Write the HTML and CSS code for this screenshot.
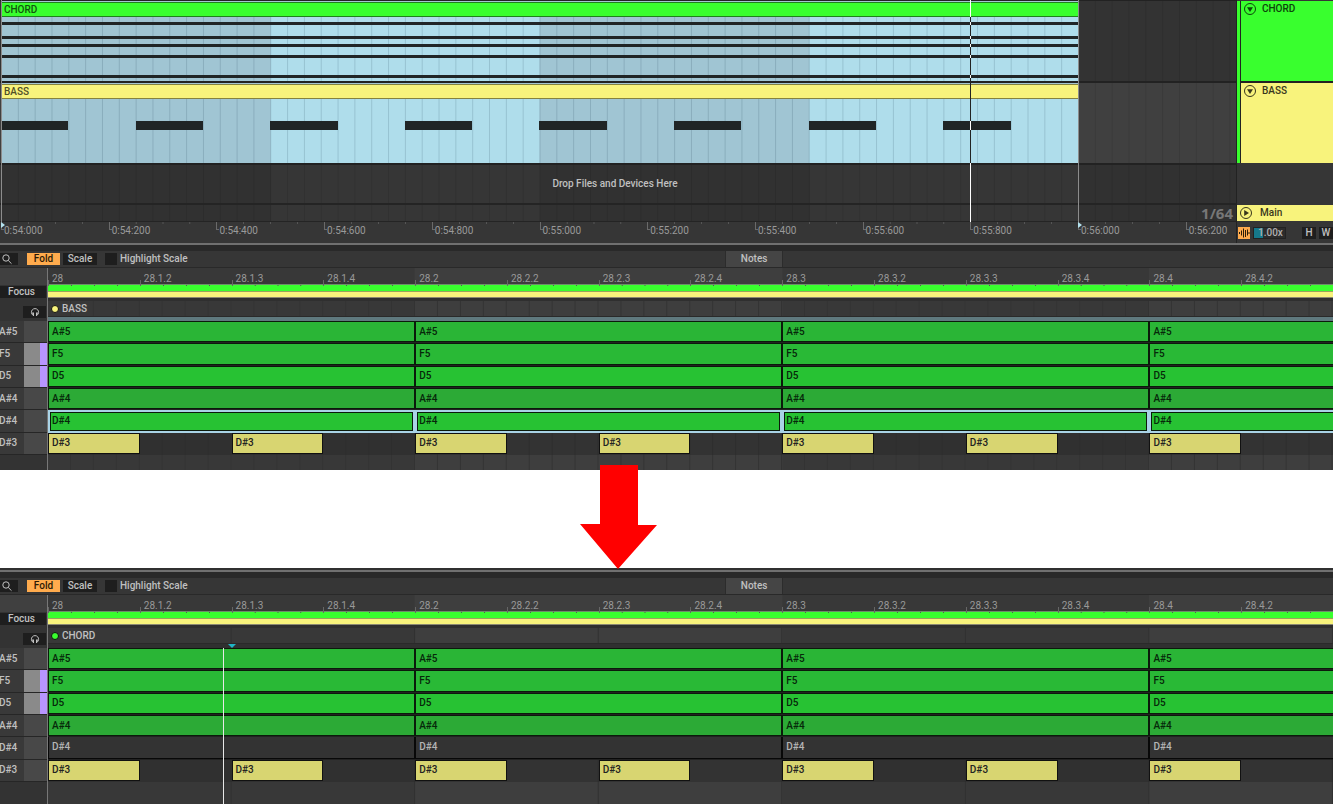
FILE: index.html
```html
<!DOCTYPE html>
<html lang="en">
  <head>
    <meta charset="UTF-8" />
    <meta name="viewport" content="width=device-width, initial-scale=1.0" />
    <title>Chord and Bass</title>
    <link rel="stylesheet" href="styles.css" />
  </head>
  <body>
    <section class="arrangement">
      <div class="timeline">
        <div class="lane">
          <div class="clip chord">
            <div class="clip-title">CHORD</div>
            <div class="clip-body chord-lines"></div>
          </div>
        </div>
        <div class="lane selected">
          <div class="clip bass">
            <div class="clip-title">BASS</div>
            <div class="clip-body bass-notes">
              <i></i><i></i><i></i><i></i><i></i><i></i><i></i><i></i>
            </div>
          </div>
        </div>
        <div class="drop-lane">Drop Files and Devices Here</div>
        <div class="main-lane">1/64</div>
        <div class="time-ruler">
          <span>0:54:000</span>
          <span>0:54:200</span>
          <span>0:54:400</span>
          <span>0:54:600</span>
          <span>0:54:800</span>
          <span>0:55:000</span>
          <span>0:55:200</span>
          <span>0:55:400</span>
          <span>0:55:600</span>
          <span>0:55:800</span>
          <span>0:56:000</span>
          <span>0:56:200</span>
        </div>
        <div class="marker start"></div>
        <div class="marker playhead"></div>
        <div class="marker end"></div>
      </div>

      <div class="tracks">
        <div class="track-group">
          <div class="track chord-track">
            <button class="fold" aria-label="Fold CHORD">
              <svg viewBox="0 0 14 14"><circle cx="7" cy="7" r="5.5" /><path d="M4 5.3h6L7 10z" /></svg>
            </button>
            CHORD
          </div>
          <div class="track bass-track">
            <button class="fold" aria-label="Fold BASS">
              <svg viewBox="0 0 14 14"><circle cx="7" cy="7" r="5.5" /><path d="M4 5.3h6L7 10z" /></svg>
            </button>
            BASS
          </div>
        </div>
        <div class="main-track">
          <button class="fold" aria-label="Unfold Main">
            <svg viewBox="0 0 14 14"><circle cx="7" cy="7" r="5.5" /><path d="M5.2 4v6L10 7z" /></svg>
          </button>
          Main
        </div>
        <div class="track-status">
          <button class="wave" aria-label="Waveform zoom">
            <svg viewBox="0 0 12 12"><path d="M1.5 5v2M3.5 3.5v5M5.5 1.5v9M7.5 3v7M9.5 2.5v6M11 5v2" /></svg>
          </button>
          <input class="zoom" type="text" value="1.00x" aria-label="Waveform zoom factor" />
          <button class="small">H</button>
          <button class="small">W</button>
        </div>
      </div>
    </section>

    <!-- piano roll, BASS selected -->
    <section class="roll fine">
      <div class="toolbar">
        <button class="search" aria-label="Search">
          <svg viewBox="0 0 12 12"><circle cx="5" cy="5" r="3.2" /><path d="M7.3 7.5L10.5 10.7" /></svg>
        </button>
        <button class="tool on">Fold</button>
        <button class="tool">Scale</button>
        <label class="check"><input type="checkbox" />Highlight Scale</label>
        <button class="tab">Notes</button>
      </div>
      <div class="roll-main">
        <div class="side">
          <button class="focus">Focus</button>
          <button class="listen" aria-label="Preview">
            <svg viewBox="0 0 10 10"><path d="M3 8.2A3.6 3.6 0 1 1 7 8.2" /><path class="cups" d="M2 5.5h2v3.5H3zM6 5.5h2L7 9H6z" /></svg>
          </button>
          <ul class="keys">
            <li>A#5</li>
            <li class="lit">F5</li>
            <li class="lit">D5</li>
            <li>A#4</li>
            <li>D#4</li>
            <li>D#3</li>
          </ul>
        </div>
        <div class="editor">
          <div class="beat-ruler">
            <span>28</span><span>28.1.2</span><span>28.1.3</span><span>28.1.4</span>
            <span>28.2</span><span>28.2.2</span><span>28.2.3</span><span>28.2.4</span>
            <span>28.3</span><span>28.3.2</span><span>28.3.3</span><span>28.3.4</span>
            <span>28.4</span><span>28.4.2</span>
          </div>
          <div class="loops"><div class="loop green"></div><div class="loop yellow"></div></div>
          <div class="clip-name"><i class="dot yellow"></i>BASS</div>
          <div class="strip"></div>
          <div class="rows">
            <div class="row as5"><span>A#5</span><span>A#5</span><span>A#5</span><span>A#5</span></div>
            <div class="row f5"><span>F5</span><span>F5</span><span>F5</span><span>F5</span></div>
            <div class="row d5"><span>D5</span><span>D5</span><span>D5</span><span>D5</span></div>
            <div class="row as4"><span>A#4</span><span>A#4</span><span>A#4</span><span>A#4</span></div>
            <div class="row ds4 picked"><span>D#4</span><span>D#4</span><span>D#4</span><span>D#4</span></div>
            <div class="row ds3"><span>D#3</span><span>D#3</span><span>D#3</span><span>D#3</span><span>D#3</span><span>D#3</span><span>D#3</span></div>
          </div>
        </div>
      </div>
    </section>

    <div class="gap">
      <svg class="arrow" viewBox="0 0 77 104"><path d="M20 0h38v60L77 60 38 104 0 59h20z" /></svg>
    </div>

    <!-- piano roll, CHORD selected -->
    <section class="roll coarse">
      <div class="toolbar">
        <button class="search" aria-label="Search">
          <svg viewBox="0 0 12 12"><circle cx="5" cy="5" r="3.2" /><path d="M7.3 7.5L10.5 10.7" /></svg>
        </button>
        <button class="tool on">Fold</button>
        <button class="tool">Scale</button>
        <label class="check"><input type="checkbox" />Highlight Scale</label>
        <button class="tab">Notes</button>
      </div>
      <div class="roll-main">
        <div class="side">
          <button class="focus">Focus</button>
          <button class="listen" aria-label="Preview">
            <svg viewBox="0 0 10 10"><path d="M3 8.2A3.6 3.6 0 1 1 7 8.2" /><path class="cups" d="M2 5.5h2v3.5H3zM6 5.5h2L7 9H6z" /></svg>
          </button>
          <ul class="keys">
            <li>A#5</li>
            <li class="lit">F5</li>
            <li class="lit">D5</li>
            <li>A#4</li>
            <li>D#4</li>
            <li>D#3</li>
          </ul>
        </div>
        <div class="editor">
          <div class="beat-ruler">
            <span>28</span><span>28.1.2</span><span>28.1.3</span><span>28.1.4</span>
            <span>28.2</span><span>28.2.2</span><span>28.2.3</span><span>28.2.4</span>
            <span>28.3</span><span>28.3.2</span><span>28.3.3</span><span>28.3.4</span>
            <span>28.4</span><span>28.4.2</span>
          </div>
          <div class="loops"><div class="loop green"></div><div class="loop yellow"></div></div>
          <div class="clip-name"><i class="dot green"></i>CHORD</div>
          <div class="strip"><i class="insert"></i></div>
          <div class="rows">
            <div class="row as5"><span>A#5</span><span>A#5</span><span>A#5</span><span>A#5</span></div>
            <div class="row f5"><span>F5</span><span>F5</span><span>F5</span><span>F5</span></div>
            <div class="row d5"><span>D5</span><span>D5</span><span>D5</span><span>D5</span></div>
            <div class="row as4"><span>A#4</span><span>A#4</span><span>A#4</span><span>A#4</span></div>
            <div class="row ds4 muted"><span>D#4</span><span>D#4</span><span>D#4</span><span>D#4</span></div>
            <div class="row ds3"><span>D#3</span><span>D#3</span><span>D#3</span><span>D#3</span><span>D#3</span><span>D#3</span><span>D#3</span></div>
          </div>
          <div class="song-line"></div>
        </div>
      </div>
    </section>
  </body>
</html>
```
FILE: styles.css
```css
* {
  box-sizing: border-box;
}

body {
  margin: 0;
  min-height: 100vh;
  display: flex;
  flex-direction: column;
  overflow-x: hidden;
  background: #fff;
  color: #c0c0c0;
  font: 500 10px/14px Roboto, "Liberation Sans", sans-serif;
}

button,
input {
  margin: 0;
  padding: 0;
  border: 0;
  border-radius: 0;
  color: inherit;
  font: inherit;
}

button {
  display: flex;
  align-items: center;
  justify-content: center;
  background: #1e1e1e;
  cursor: pointer;
}

svg {
  display: block;
  fill: none;
  stroke: currentColor;
}

/* arrangement */
.arrangement {
  display: flex;
  background: #222;
}

.timeline {
  position: relative;
  flex: 1;
  min-width: 0;
  padding-top: 1px;
}

.lane {
  height: 82px;
  padding-left: 1px;
  border-bottom: 2px solid #222;
  background: linear-gradient(90deg, rgba(0, 0, 0, 0.1) 1px, transparent 1px) 1px 0 / 1.3625% 100% #333;
}

.lane.selected {
  background-color: #404040;
}

.clip {
  width: 87.2%;
  border-top: 1px solid #a3c5d3;
}

.clip-title {
  height: 15px;
  padding-left: 3px;
  line-height: 13px;
  border-top: 1px solid;
  border-bottom: 1px solid;
}

.chord .clip-title {
  background: #39ff2e;
  border-color: #20801c;
  color: #12550f;
}

.bass .clip-title {
  background: #f8f37c;
  border-color: #85823f;
  color: #514f28;
}

.clip-body {
  height: 64px;
  background:
    linear-gradient(90deg, rgba(0, 30, 50, 0.14) 1px, transparent 1px) 0 0 / 1.5625% 100%,
    linear-gradient(90deg, #a0c5d3 50%, #afddeb 50%) 0 0 / 50% 100%;
}

.chord-lines {
  background:
    linear-gradient(#202526 0 0) 0 5px / 100% 3px no-repeat,
    linear-gradient(#202526 0 0) 0 19px / 100% 3px no-repeat,
    linear-gradient(#202526 0 0) 0 27px / 100% 3px no-repeat,
    linear-gradient(#202526 0 0) 0 38px / 100% 3px no-repeat,
    linear-gradient(#202526 0 0) 0 58px / 100% 3px no-repeat,
    linear-gradient(90deg, rgba(0, 30, 50, 0.14) 1px, transparent 1px) 0 0 / 1.5625% 100%,
    linear-gradient(90deg, #a0c5d3 50%, #afddeb 50%) 0 0 / 50% 100%;
}

.bass-notes {
  display: grid;
  grid-template-columns: repeat(8, 1fr);
  align-items: start;
  padding-top: 22px;
}

.bass-notes i {
  width: 50%;
  height: 9px;
  background: #202526;
}

.drop-lane,
.main-lane {
  background:
    linear-gradient(90deg, rgba(0, 0, 0, 0.1) 1px, transparent 1px) 1px 0 / 1.3625% 100%,
    linear-gradient(90deg, #313131 50%, #363636 50%) 1px 0 / 43.6% 100%;
}

.drop-lane {
  height: 40px;
  padding-right: 6px;
  border-bottom: 2px solid #242424;
  line-height: 38px;
  text-align: center;
}

.main-lane {
  height: 17px;
  padding-right: 3px;
  border-bottom: 1px solid #242424;
  color: #777;
  font: 700 15px/16px "Open Sans", sans-serif;
  text-align: right;
}

.time-ruler {
  display: grid;
  grid-template-columns: repeat(11, minmax(0, 1077fr)) minmax(0, 503fr);
  height: 21px;
  padding-left: 1px;
  background: #363636;
  color: #999;
  font-weight: 400;
}

.time-ruler span {
  padding: 2px 0 0 3px;
  white-space: nowrap;
  background:
    linear-gradient(#6a6a6a 0 0) 0 0 / 1px 8px no-repeat,
    linear-gradient(#6a6a6a 0 0) 0 7px / 3px 1px no-repeat,
    linear-gradient(90deg, #555 1px, transparent 1px) 0 0 / 25% 2px repeat-x;
}

.time-ruler span:last-child {
  background:
    linear-gradient(#6a6a6a 0 0) 0 0 / 1px 8px no-repeat,
    linear-gradient(#6a6a6a 0 0) 0 7px / 3px 1px no-repeat;
}

.marker {
  position: absolute;
  top: 0;
  bottom: 21px;
  width: 1px;
  background: #8c8c8c;
}

.marker.start {
  left: 1px;
}

.marker.end {
  left: 87.2%;
}

.marker.end::after,
.marker.start::after {
  content: "";
  position: absolute;
  top: 100%;
  border: solid transparent;
  border-width: 3px 0 3px 4px;
  border-left-color: #b5e2ee;
}

/* the playhead inverts over the clip bodies */
.marker.playhead {
  left: 78.5%;
  background: linear-gradient(
    #fff 17px, #222 17px 22px, #fff 22px 25px, #222 25px 36px, #fff 36px 39px,
    #222 39px 44px, #fff 44px 47px, #222 47px 55px, #fff 55px 58px, #222 58px 75px,
    #fff 75px 78px, #222 78px 121px, #fff 121px 130px, #222 130px 163px, #fff 163px
  );
}

.tracks {
  display: flex;
  flex-direction: column;
  width: 97px;
  padding-top: 1px;
  border-left: 1px solid #222;
  background: #363636;
}

.track-group {
  padding-left: 1px;
  border-left: 3px solid #39ff2e;
  background: #222;
}

.track {
  display: flex;
  align-items: flex-start;
  gap: 5px;
  height: 80px;
  padding-left: 2px;
  line-height: 16px;
}

.track + .track {
  margin-top: 2px;
}

.chord-track {
  background: #39ff2e;
  color: #0c450a;
}

.bass-track,
.main-track {
  background: #f8f37c;
  color: #38371c;
}

.fold {
  width: 14px;
  height: 14px;
  margin-top: 1px;
  background: none;
  color: inherit;
}

.fold svg {
  width: 14px;
  height: 14px;
}

.fold path {
  fill: currentColor;
  stroke: none;
}

.main-track {
  display: flex;
  align-items: center;
  gap: 7px;
  height: 16px;
  margin-top: 42px;
  padding-left: 2px;
}

.main-track .fold {
  margin: 0;
}

.track-status {
  display: flex;
  align-items: center;
  gap: 3px;
  height: 22px;
  padding: 1px 0 0 1px;
}

.wave {
  width: 12px;
  height: 12px;
  background: #ffab4d;
  color: #2a1c08;
}

.wave svg {
  width: 12px;
  height: 12px;
}

.zoom {
  width: 33px;
  height: 12px;
  padding-left: 4px;
  border: 1px solid #222;
  background: linear-gradient(90deg, #16788a 9px, #2c2c2c 9px);
  color: #b0b0b0;
}

.small {
  width: 14px;
  height: 12px;
}

.zoom + .small {
  margin-left: auto;
}

/* piano roll */
.roll {
  display: flex;
  flex-direction: column;
  border-top: 2px solid #707070;
  background: #383838;
}

.toolbar {
  display: flex;
  align-items: center;
  height: 23px;
  padding-top: 6px;
  border-bottom: 1px solid #292929;
  background: linear-gradient(#292929 6px, #363636 6px);
}

.search {
  width: 18px;
  height: 12px;
  padding-right: 4px;
}

.search svg {
  width: 12px;
  height: 12px;
}

.tool {
  width: 34px;
  height: 12px;
  margin-left: 3px;
}

.tool.on {
  width: 33px;
  margin-left: 9px;
  background: #ffab4d;
  color: #2c1a05;
}

.check {
  display: flex;
  align-items: center;
  gap: 3px;
  margin-left: 8px;
}

.check input {
  appearance: none;
  width: 12px;
  height: 12px;
  background: #1e1e1e;
}

.tab {
  position: absolute;
  left: 54.4%;
  width: 58px;
  height: 16px;
  border: solid #2c2c2c;
  border-width: 0 1px;
  background: #454545;
}

.roll-main {
  flex: 1;
  display: flex;
}

.side {
  display: flex;
  flex-direction: column;
  width: 47px;
  padding-top: 18px;
  background: linear-gradient(#404040 17px, #333 17px);
}

.focus {
  width: 46px;
  height: 12px;
  padding-right: 3px;
}

.listen {
  align-self: flex-end;
  width: 23px;
  height: 12px;
  margin: 8px 1px 3px 0;
}

.listen svg {
  width: 10px;
  height: 10px;
}

.listen .cups {
  fill: currentColor;
  stroke: none;
}

.keys {
  display: grid;
  grid-template-rows: repeat(6, 1fr);
  height: 134px;
  margin: 0;
  padding: 0;
  list-style: none;
}

.keys li {
  display: flex;
  align-items: center;
  text-indent: -1px;
  border-bottom: 1px solid #262626;
  background: linear-gradient(90deg, #393939 24px, #484848 24px);
}

.keys .lit {
  background: linear-gradient(90deg, #393939 24px, #8a8a8a 24px 40px, #b795ff 40px);
}

/* one beat is 2/7 of the editor width */
.editor {
  position: relative;
  flex: 1;
  min-width: 0;
  padding-bottom: 15px;
  border-left: 1px solid #777;
}

.coarse .editor {
  padding-bottom: 22px;
  background:
    linear-gradient(90deg, transparent calc(100% - 1px), #303030 0) 0 0 / 14.285714% 100%,
    linear-gradient(90deg, #383838 50%, #3e3e3e 50%) 0 0 / 57.142857% 100%;
}

.fine .editor {
  background:
    linear-gradient(90deg, transparent calc(100% - 1px), #333 0) 0 0 / 1.785714% 100%,
    linear-gradient(90deg, #383838 50%, #3e3e3e 50%) 0 0 / 57.142857% 100%;
}

.beat-ruler {
  display: grid;
  grid-template-columns: repeat(14, minmax(0, 1fr));
  height: 16px;
  background: linear-gradient(90deg, #383838 50%, #3e3e3e 50%) 0 0 / 57.142857% 100%;
  color: #999;
  font-weight: 400;
}

.beat-ruler span {
  padding: 4px 0 0 4px;
  line-height: 14px;
  background:
    linear-gradient(#666 0 0) 0 100% / 1px 6px no-repeat,
    linear-gradient(90deg, #555 1px, transparent 1px) 0 100% / 25% 1px repeat-x;
}

.loops {
  height: 14px;
  border-top: 1px solid #6d8d6a;
  border-bottom: 1px solid #8b8972;
}

.loop {
  height: 6px;
}

.loop.green {
  background: #39ff2e;
}

.loop.yellow {
  border-top: 1px solid #9aa35e;
  background: #f8f37c;
}

.clip-name {
  display: flex;
  align-items: center;
  gap: 4px;
  height: 19px;
  padding: 1px 0 0 4px;
  border-top: 3px solid #2f2f2f;
  border-bottom: 1px solid #2a2a2a;
}

.dot {
  width: 6px;
  height: 6px;
  border: 1px solid #111;
  border-radius: 50%;
  box-sizing: content-box;
  margin: -1px;
}

.dot.yellow {
  background: #f8f37c;
}

.dot.green {
  background: #39ff2e;
}

.strip {
  position: relative;
  height: 4px;
  background: #5f797e;
}

.coarse .strip {
  background: #303030;
}

.insert {
  position: absolute;
  left: 14.285714%;
  top: 0;
  margin-left: -4px;
  border: 4px solid transparent;
  border-top-color: #20b5c5;
  border-bottom: 0;
}

.rows {
  display: grid;
  grid-template-rows: repeat(6, 1fr);
  height: 134px;
}

.row {
  display: grid;
  grid-template-columns: 4fr 4fr 4fr 2fr;
  padding-bottom: 1px;
  background: #222;
}

.row span {
  display: flex;
  align-items: center;
  padding-left: 3px;
  border: 1px solid #0b1a0b;
  color: #06280a;
}

.row span:last-child {
  border-right: 0;
}

.as5 span {
  background: #2ab536;
}

.f5 span {
  background: #29b936;
}

.d5 span {
  background: #27c233;
}

.as4 span {
  background: #2caa36;
}

.ds4 span {
  background: #27c233;
}

.picked {
  padding-bottom: 0;
}

.picked span {
  padding-left: 2px;
  border: 2px solid #a9d3e6;
  box-shadow: inset 0 0 0 1px #0b1a0b;
}

.picked span:last-child {
  margin-right: -1px;
}

.muted span {
  border-width: 0 1px 1px;
  border-color: #080808;
  background: #333;
  color: #b5b5b5;
}

.row.ds3 {
  grid-template-columns: repeat(7, 1fr);
  background: rgba(40, 40, 40, 0.5);
}

.ds3 span,
.ds3 span:last-child {
  width: 50%;
  border: 1px solid #111;
  background: #d8d571;
  color: #222;
}

.song-line {
  position: absolute;
  left: 13.6%;
  top: 53px;
  bottom: 0;
  width: 1px;
  background: #e8e8e8;
}

.gap {
  position: relative;
  height: 100px;
  border-bottom: 2px solid #303030;
}

.roll.coarse {
  flex: 1;
}

/* the arrow starts over the upper roll */
.arrow {
  position: absolute;
  left: 43.5%;
  top: -5px;
  width: 77px;
  height: 104px;
  z-index: 1;
}

.arrow path {
  fill: #f00;
  stroke: none;
}
```
